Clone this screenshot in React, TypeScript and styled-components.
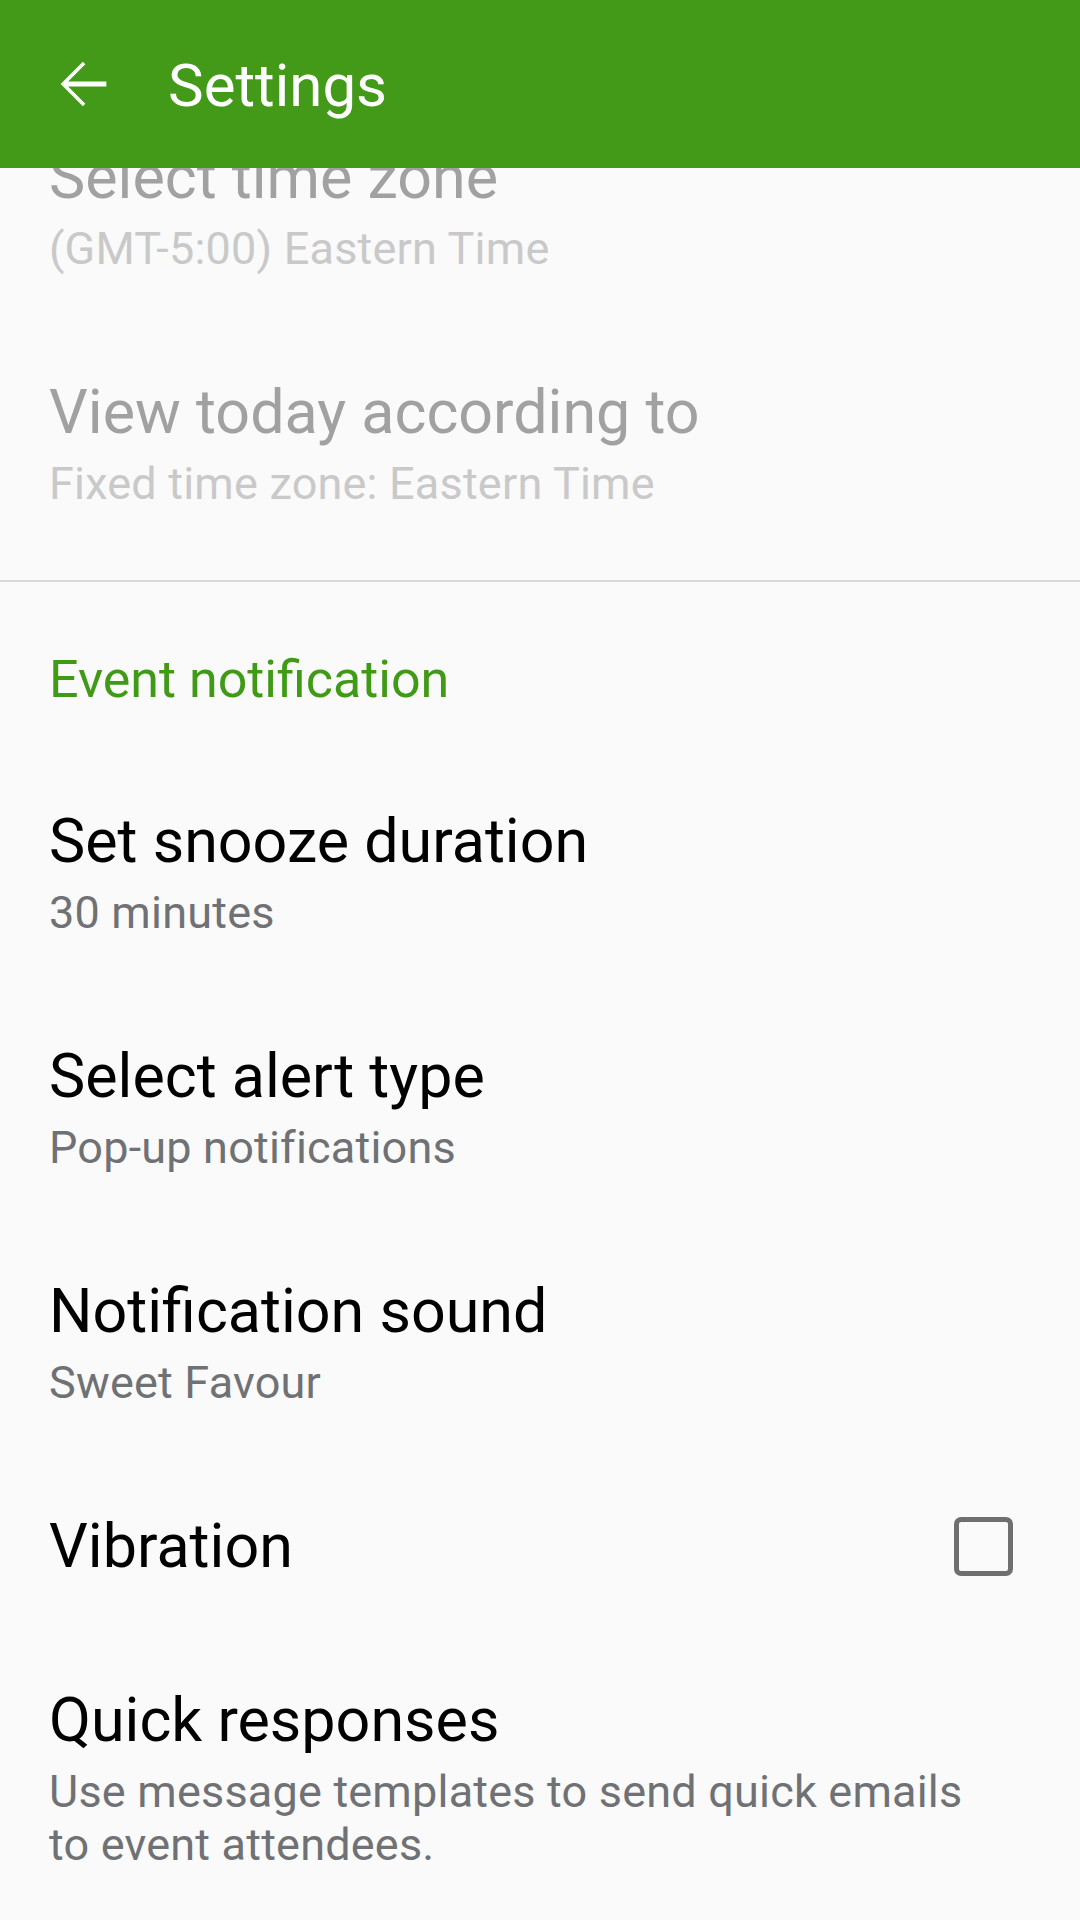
import React from "react";
import styled, { createGlobalStyle } from "styled-components";

const Global = createGlobalStyle`
  html, body {
    margin: 0;
    padding: 0;
    background: #fafafa;
  }
  body {
    font-family: Roboto, "Noto Sans", "Liberation Sans", sans-serif;
    -webkit-font-smoothing: antialiased;
  }
`;

const Screen = styled.div`
  width: 1080px;
  height: 1920px;
  overflow: hidden;
  position: relative;
  background: #fafafa;
`;

const AppBar = styled.header`
  position: absolute;
  top: 0;
  left: 0;
  right: 0;
  height: 168px;
  background: #439a18;
  display: flex;
  align-items: center;
  z-index: 2;
`;

const BackButton = styled.button`
  width: 70px;
  height: 70px;
  margin-left: 48px;
  padding: 0;
  border: none;
  background: transparent;
  display: flex;
  align-items: center;
  justify-content: center;
`;

const AppTitle = styled.h1`
  margin: 4px 0 0 50px;
  font-size: 60px;
  font-weight: 400;
  color: #ffffff;
  line-height: 70px;
`;

const List = styled.main`
  display: flex;
  flex-direction: column;
  padding-top: 91px;
`;

const Section = styled.section<{ $divider?: boolean }>`
  display: flex;
  flex-direction: column;
  padding-bottom: ${(p) => (p.$divider ? "19px" : "0")};
  border-bottom: ${(p) => (p.$divider ? "2px solid #d9d9d9" : "none")};
`;

const SectionHeader = styled.div`
  padding: 68px 49px 45px;
  font-size: 52px;
  line-height: 60px;
  color: #3f9a16;
`;

const Row = styled.div<{ $single?: boolean }>`
  display: flex;
  align-items: center;
  padding: ${(p) => (p.$single ? "51px 49px 53px" : "51px 49px")};
`;

const RowText = styled.div`
  flex: 1;
  display: flex;
  flex-direction: column;
  padding-right: 40px;
`;

const Title = styled.div<{ $disabled?: boolean }>`
  font-size: 61px;
  line-height: 70px;
  color: ${(p) => (p.$disabled ? "#a1a1a1" : "#000000")};
`;

const Subtitle = styled.div<{ $disabled?: boolean }>`
  margin-top: 10px;
  font-size: 45px;
  line-height: 53px;
  letter-spacing: 0.2px;
  color: ${(p) => (p.$disabled ? "#c9c9c9" : "#6f7174")};
`;

const CheckBox = styled.div`
  width: 59px;
  height: 59px;
  box-sizing: border-box;
  border: 5px solid #6f6f6f;
  border-radius: 7px;
  margin-right: 18px;
  flex-shrink: 0;
`;

type Item = {
  title: string;
  subtitle?: string;
  disabled?: boolean;
  checkbox?: boolean;
};

const timeItems: Item[] = [
  { title: "Select time zone", subtitle: "(GMT-5:00) Eastern Time", disabled: true },
  { title: "View today according to", subtitle: "Fixed time zone: Eastern Time", disabled: true },
];

const notifItems: Item[] = [
  { title: "Set snooze duration", subtitle: "30 minutes" },
  { title: "Select alert type", subtitle: "Pop-up notifications" },
  { title: "Notification sound", subtitle: "Sweet Favour" },
  { title: "Vibration", checkbox: true },
  {
    title: "Quick responses",
    subtitle: "Use message templates to send quick emails to event attendees.",
  },
];

const SettingRow = ({ item }: { item: Item }) => (
  <Row $single={!item.subtitle}>
    <RowText>
      <Title $disabled={item.disabled}>{item.title}</Title>
      {item.subtitle && <Subtitle $disabled={item.disabled}>{item.subtitle}</Subtitle>}
    </RowText>
    {item.checkbox && <CheckBox />}
  </Row>
);

export default function App() {
  return (
    <Screen>
      <Global />
      <AppBar>
        <BackButton aria-label="Back">
          <svg width="70" height="70" viewBox="0 0 24 24">
            <path
              fill="#ffffff"
              d="M20 11.15H6.9l5.9-5.9L11.95 4.4 4.35 12l7.6 7.6.85-.85-5.9-5.9H20z"
            />
          </svg>
        </BackButton>
        <AppTitle>Settings</AppTitle>
      </AppBar>
      <List>
        <Section $divider>
          {timeItems.map((it) => (
            <SettingRow key={it.title} item={it} />
          ))}
        </Section>
        <Section>
          <SectionHeader>Event notification</SectionHeader>
          {notifItems.map((it) => (
            <SettingRow key={it.title} item={it} />
          ))}
        </Section>
      </List>
    </Screen>
  );
}
